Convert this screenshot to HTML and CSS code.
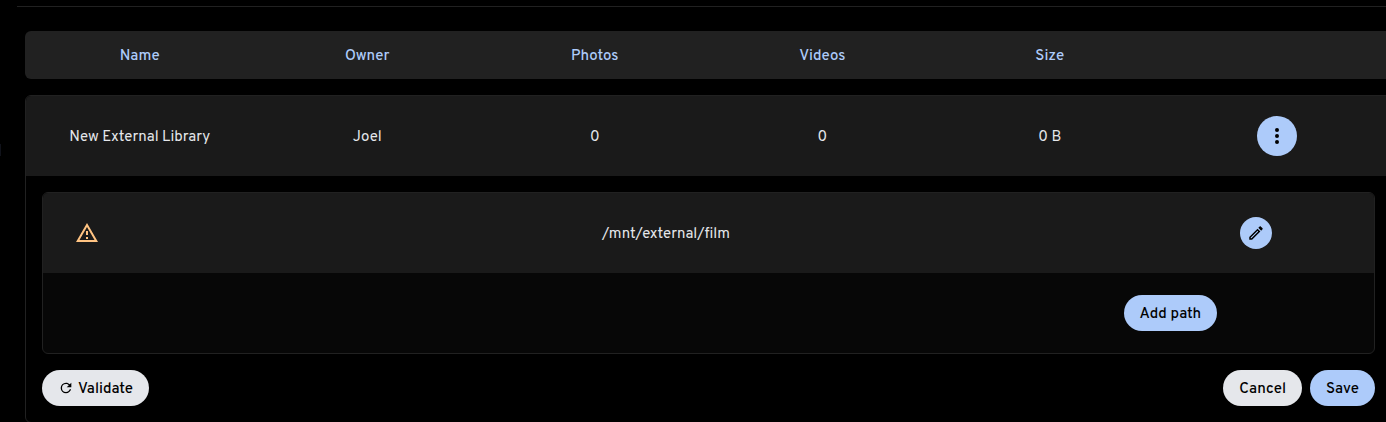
FILE: index.html
```
<!DOCTYPE html>
<html lang="en">
<head>
    <meta charset="UTF-8">
    <meta name="viewport" content="width=device-width, initial-scale=1.0">
    <title>External Libraries</title>
    <link rel="stylesheet" href="styles.css">
</head>
<body>
    <div class="layout">
        <aside class="sidebar"><div class="active-item"></div></aside>
        <main class="content">
            <table class="library-table">
                <thead>
                    <tr class="columns">
                        <th class="text">Name</th>
                        <th class="text">Owner</th>
                        <th class="text">Photos</th>
                        <th class="text">Videos</th>
                        <th class="text">Size</th>
                        <th></th>
                    </tr>
                </thead>
                <tbody>
                    <tr class="columns library">
                        <td class="text">New External Library</td>
                        <td class="text">Joel</td>
                        <td class="text">0</td>
                        <td class="text">0</td>
                        <td class="text">0 B</td>
                        <td>
                            <button type="button" class="icon-button" aria-label="Library options">
                                <svg width="24" height="24" viewBox="0 0 24 24"><path d="M12,16A2,2 0 0,1 14,18A2,2 0 0,1 12,20A2,2 0 0,1 10,18A2,2 0 0,1 12,16M12,10A2,2 0 0,1 14,12A2,2 0 0,1 12,14A2,2 0 0,1 10,12A2,2 0 0,1 12,10M12,4A2,2 0 0,1 14,6A2,2 0 0,1 12,8A2,2 0 0,1 10,6A2,2 0 0,1 12,4Z"/></svg>
                            </button>
                        </td>
                    </tr>
                    <tr class="details">
                        <td colspan="6">
                            <form class="path-form">
                                <table class="path-table">
                                    <colgroup>
                                        <col class="status-col">
                                        <col>
                                        <col class="action-col">
                                    </colgroup>
                                    <tbody>
                                        <tr class="path">
                                            <td>
                                                <svg class="warning" width="24" height="24" viewBox="0 0 24 24" role="img" aria-label="Warning"><path d="M12,2L1,21H23M12,6L19.53,19H4.47M11,10V14H13V10M11,16V18H13V16"/></svg>
                                            </td>
                                            <td class="text">/mnt/external/film</td>
                                            <td class="path-action">
                                                <button type="button" class="icon-button small" aria-label="Edit path">
                                                    <svg width="18" height="18" viewBox="0 0 24 24"><path d="M14.06,9L15,9.94L5.92,19H5V18.08L14.06,9M17.66,3C17.41,3 17.15,3.1 16.96,3.29L15.13,5.12L18.88,8.87L20.71,7.04C21.1,6.65 21.1,6 20.71,5.63L18.37,3.29C18.17,3.09 17.92,3 17.66,3M14.06,6.19L3,17.25V21H6.75L17.81,9.94L14.06,6.19Z"/></svg>
                                                </button>
                                            </td>
                                        </tr>
                                        <tr>
                                            <td colspan="3" class="add-path">
                                                <button type="button" class="button">Add path</button>
                                            </td>
                                        </tr>
                                    </tbody>
                                </table>
                                <div class="form-actions">
                                    <button type="button" class="button gray validate">
                                        <svg width="16" height="16" viewBox="0 0 24 24"><path d="M17.65,6.35C16.2,4.9 14.21,4 12,4A8,8 0 0,0 4,12A8,8 0 0,0 12,20C15.73,20 18.84,17.45 19.73,14H17.65C16.83,16.33 14.61,18 12,18A6,6 0 0,1 6,12A6,6 0 0,1 12,6C13.66,6 15.14,6.69 16.22,7.78L13,11H20V4L17.65,6.35Z"/></svg>
                                        Validate
                                    </button>
                                    <button type="button" class="button gray">Cancel</button>
                                    <button type="submit" class="button">Save</button>
                                </div>
                            </form>
                        </td>
                    </tr>
                </tbody>
            </table>
        </main>
    </div>
</body>
</html>
```
FILE: styles.css
```
* {
    box-sizing: border-box;
}
body {
    margin: 0;
    overflow: hidden;
    background: #000;
    color: #e5e7eb;
    font-family: Overpass, Roboto, sans-serif;
    font-size: 15px;
    line-height: 20px;
}
svg {
    display: block;
    fill: currentColor;
}
.layout {
    display: flex;
    padding-top: 6px;
}
.sidebar {
    flex: 0 0 17px;
    padding-top: 138px;
}
.active-item {
    width: 1px;
    height: 12px;
    background: #10121a;
}
/* the table runs a little past the right edge of the window */
.content {
    flex: 1;
    padding: 24px 0 0 8px;
    margin-right: -6px;
    border-top: 1px solid #212121;
}
.library-table, .library-table > thead, .library-table > tbody, .details, .details > td {
    display: block;
}
th, td {
    padding: 0;
    text-align: center;
}
/* Overpass sits high in its line box */
.text {
    padding-top: 4px;
}
.library-table > thead {
    margin-bottom: 16px;
    padding: 0 1px;
    border-radius: 6px;
    background: #212121;
    color: #adcbfa;
}
.library-table > tbody {
    border: 1px solid #212121;
    border-radius: 6px;
    overflow: hidden;
}
.columns {
    display: grid;
    grid-template-columns: repeat(6, 1fr);
    align-items: center;
    justify-items: center;
    height: 48px;
}
.columns th {
    font-weight: 500;
}
.library {
    height: 80px;
    background: #1a1a1a;
}
.path-form {
    padding: 16px;
}
.path-table {
    width: 100%;
    table-layout: fixed;
    border: 1px solid #212121;
    border-radius: 6px;
    border-spacing: 0;
    background: #070707;
    overflow: hidden;
}
.path-table tr {
    height: 80px;
}
.path {
    background: #1a1a1a;
}
.status-col {
    width: 88px;
}
.action-col {
    width: 13%;
}
.warning {
    margin: 0 auto;
    color: #ffc382;
}
.path-action {
    padding-right: 62px;
}
.add-path {
    padding-right: 157px;
    text-align: right;
}
.icon-button {
    display: flex;
    align-items: center;
    justify-content: center;
    width: 40px;
    height: 40px;
    margin: 0 auto;
    padding: 0;
    border: none;
    border-radius: 50%;
    background: #adcbfa;
    color: #000;
    cursor: pointer;
}
.icon-button.small {
    width: 32px;
    height: 32px;
}
.button {
    height: 36px;
    padding: 4px 16px 0;
    border: none;
    border-radius: 18px;
    background: #adcbfa;
    color: #000;
    font: inherit;
    font-weight: 500;
    vertical-align: middle;
    cursor: pointer;
}
.button.gray {
    background: #e5e7eb;
}
.form-actions {
    display: flex;
    gap: 8px;
    margin-top: 16px;
}
.validate {
    display: flex;
    align-items: center;
    gap: 4px;
    margin-right: auto;
}
.validate svg {
    margin-bottom: 4px;
}
```
